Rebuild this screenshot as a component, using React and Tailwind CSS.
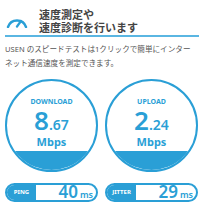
import React from "react";

const font = { fontFamily: '"Noto Sans", "Noto Sans CJK JP", sans-serif' };

function Gauge({ label, big, small }) {
  return (
    <div className="w-[93px] h-[93px] rounded-full border-2 border-[#2a9fd6] overflow-hidden flex flex-col items-center bg-white">
      <div className="mt-[16px] text-[7px] leading-[10px] font-bold text-[#2a9fd6]">{label}</div>
      <div className="flex items-baseline text-[#2a9fd6] leading-[27px] h-[27px]">
        <span className="text-[26px] font-semibold">{big}</span>
        <span className="text-[14px] font-semibold">{small}</span>
      </div>
      <div className="mt-[1px] text-[11px] leading-[14px] font-bold text-[#2a9fd6]">Mbps</div>
      <div className="mt-auto w-full h-[19px] bg-[#2a9fd6]" />
    </div>
  );
}

function Pill({ label, value }) {
  return (
    <div className="w-[93px] h-[19px] rounded-full border-2 border-[#2a9fd6] flex bg-white">
      <div className="w-[29px] rounded-l-full bg-[#2a9fd6] flex items-center justify-center text-white text-[6px] leading-[9px] font-bold">{label}</div>
      <div className="flex-1 flex items-center justify-end pr-[3px] text-[#2a9fd6]">
        <div className="flex items-baseline leading-[15px]">
          <span className="text-[17px] font-semibold">{value}</span>
          <span className="ml-[2px] text-[9px] font-semibold">ms</span>
        </div>
      </div>
    </div>
  );
}

export default function App() {
  return (
    <div className="w-[204px] h-[220px] bg-white px-[5px] overflow-hidden" style={font}>
      <div className="flex items-center pt-[8px] pb-[1px]">
        <svg width="22" height="14" viewBox="0 0 22 14" className="ml-[1px] mr-[11px]">
          <path d="M2 13 A9.5 9.5 0 0 1 20 13" fill="none" stroke="#2a9fd6" strokeWidth="2.4" strokeLinecap="round" />
          <path d="M11 12.5 L15 7" fill="none" stroke="#2a9fd6" strokeWidth="2.2" strokeLinecap="round" />
        </svg>
        <div className="text-[11px] font-bold text-[#444]">
          <div className="leading-[13px]">速度測定や</div>
          <div className="leading-[13px]">速度診断を行います</div>
        </div>
      </div>
      <div className="h-[2px] bg-[#5ab6e2]" />
      <div className="mt-[5px] text-[7.6px] leading-[14px] text-[#555] whitespace-nowrap">
        <div>USEN のスピードテストは1クリックで簡単にインター</div>
        <div>ネット通信速度を測定できます。</div>
      </div>
      <div className="mt-[9px] flex gap-[7px]">
        <Gauge label="DOWNLOAD" big="8" small=".67" />
        <Gauge label="UPLOAD" big="2" small=".24" />
      </div>
      <div className="mt-[11px] flex gap-[7px]">
        <Pill label="PING" value="40" />
        <Pill label="JITTER" value="29" />
      </div>
    </div>
  );
}
